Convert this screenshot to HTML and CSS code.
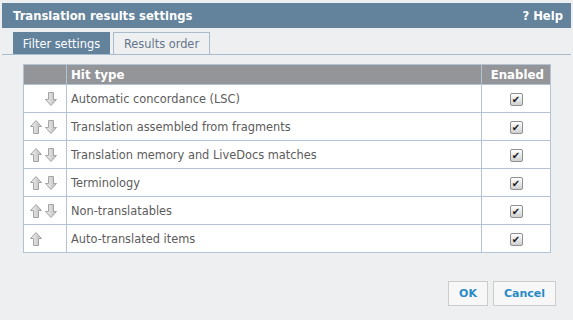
FILE: index.html
```html
<!DOCTYPE html>
<html lang="en">
<head>
  <meta charset="UTF-8">
  <title>Translation results settings</title>
  <link rel="stylesheet" href="styles.css">
</head>
<body>
  <div class="dialog">
    <div class="titlebar">
      <span class="title">Translation results settings</span>
      <span class="help">? Help</span>
    </div>

    <div class="tabs">
      <span class="tab active">Filter settings</span>
      <span class="tab">Results order</span>
    </div>

    <table class="hits">
      <thead>
        <tr>
          <th class="col-move"></th>
          <th class="col-type">Hit type</th>
          <th class="col-on">Enabled</th>
        </tr>
      </thead>
      <tbody>
        <tr>
          <td class="col-move"><span class="arrow blank"></span><svg class="arrow" viewBox="0 0 12 14"><use href="#down"/></svg></td>
          <td>Automatic concordance (LSC)</td>
          <td class="col-on"><span class="check">&#10004;</span></td>
        </tr>
        <tr>
          <td class="col-move"><svg class="arrow" viewBox="0 0 12 14"><use href="#up"/></svg><svg class="arrow" viewBox="0 0 12 14"><use href="#down"/></svg></td>
          <td>Translation assembled from fragments</td>
          <td class="col-on"><span class="check">&#10004;</span></td>
        </tr>
        <tr>
          <td class="col-move"><svg class="arrow" viewBox="0 0 12 14"><use href="#up"/></svg><svg class="arrow" viewBox="0 0 12 14"><use href="#down"/></svg></td>
          <td>Translation memory and LiveDocs matches</td>
          <td class="col-on"><span class="check">&#10004;</span></td>
        </tr>
        <tr>
          <td class="col-move"><svg class="arrow" viewBox="0 0 12 14"><use href="#up"/></svg><svg class="arrow" viewBox="0 0 12 14"><use href="#down"/></svg></td>
          <td>Terminology</td>
          <td class="col-on"><span class="check">&#10004;</span></td>
        </tr>
        <tr>
          <td class="col-move"><svg class="arrow" viewBox="0 0 12 14"><use href="#up"/></svg><svg class="arrow" viewBox="0 0 12 14"><use href="#down"/></svg></td>
          <td>Non-translatables</td>
          <td class="col-on"><span class="check">&#10004;</span></td>
        </tr>
        <tr>
          <td class="col-move"><svg class="arrow" viewBox="0 0 12 14"><use href="#up"/></svg></td>
          <td>Auto-translated items</td>
          <td class="col-on"><span class="check">&#10004;</span></td>
        </tr>
      </tbody>
    </table>

    <div class="actions">
      <button class="btn">OK</button>
      <button class="btn">Cancel</button>
    </div>
  </div>

  <!-- shared arrow shapes -->
  <svg width="0" height="0" class="defs">
    <defs>
      <linearGradient id="arrowFill" x1="0" y1="0" x2="1" y2="0">
        <stop offset="0" stop-color="#f4f4f4"/>
        <stop offset="1" stop-color="#b9b9b9"/>
      </linearGradient>
      <path id="up" d="M6 0.5 L11.5 6.5 L8.5 6.5 L8.5 13.5 L3.5 13.5 L3.5 6.5 L0.5 6.5 Z" fill="url(#arrowFill)" stroke="#a3a3a3" stroke-width="1"/>
      <path id="down" d="M6 13.5 L11.5 7.5 L8.5 7.5 L8.5 0.5 L3.5 0.5 L3.5 7.5 L0.5 7.5 Z" fill="url(#arrowFill)" stroke="#a3a3a3" stroke-width="1"/>
    </defs>
  </svg>
</body>
</html>
```

FILE: styles.css
```css
body {
  margin: 0;
  background-color: #eeeff1;
  font-family: 'DejaVu Sans', Verdana, sans-serif;
  font-size: 11.4px;
  color: #5c5c5c;
}

.dialog {
  width: 569px;
  height: 320px;
  padding: 3px 2px 0;
  display: flex;
  flex-direction: column;
}

.titlebar {
  height: 25px;
  background: #63829b;
  color: white;
  font-weight: bold;
  font-size: 11.6px;
  display: flex;
  align-items: center;
  justify-content: space-between;
  padding: 0 8px 0 11px;
}

.tabs {
  display: flex;
  gap: 3px;
  margin-top: 4px;
  padding-left: 11px;
  border-bottom: 1px solid #a9bccd;
  height: 22px;
}

.tab {
  width: 97px;
  box-sizing: border-box;
  display: flex;
  align-items: center;
  justify-content: center;
  border: 1px solid #a9bccd;
  border-bottom: none;
  color: #65768a;
  font-size: 11.4px;
  padding-top: 1px;
}

.tab.active {
  background: #63829b;
  border-color: #63829b;
  color: white;
}

.hits {
  margin: 9px 0 0 21px;
  width: 528px;
  border-collapse: collapse;
  border: 1px solid #b3c3d3;
}

.hits th {
  height: 19px;
  background: #939598;
  color: white;
  font-weight: bold;
  font-size: 11.8px;
  text-align: left;
  padding: 0 4px;
  border-left: 1px solid #b3c3d3;
}

.hits td {
  height: 27px;
  background: white;
  border: 1px solid #b3c3d3;
  padding: 0 4px;
}

.hits .col-move {
  width: 34px;
  padding: 0 2px 0 6px;
}

.hits .col-on {
  width: 58px;
  text-align: center;
}

.hits th.col-on {
  text-align: right;
  padding-right: 6px;
}

.arrow {
  display: inline-block;
  width: 12px;
  height: 14px;
  margin-right: 3px;
  vertical-align: middle;
}

.check {
  display: inline-block;
  width: 11px;
  height: 11px;
  line-height: 11px;
  border: 1px solid #909090;
  border-radius: 2px;
  background: linear-gradient(#ffffff, #d0d0d0);
  color: #1a1a1a;
  font-size: 10px;
  text-align: center;
  vertical-align: middle;
}

.actions {
  display: flex;
  justify-content: flex-end;
  gap: 5px;
  margin-top: auto;
  margin-bottom: 17px;
  padding-right: 15px;
}

.btn {
  height: 25px;
  padding: 0 10px;
  background: #f7f7f8;
  border: 1px solid #cccccc;
  color: #2a8ac6;
  font-family: 'DejaVu Sans', Verdana, sans-serif;
  font-weight: bold;
  font-size: 11px;
  cursor: pointer;
}

.defs {
  position: absolute;
}
```
